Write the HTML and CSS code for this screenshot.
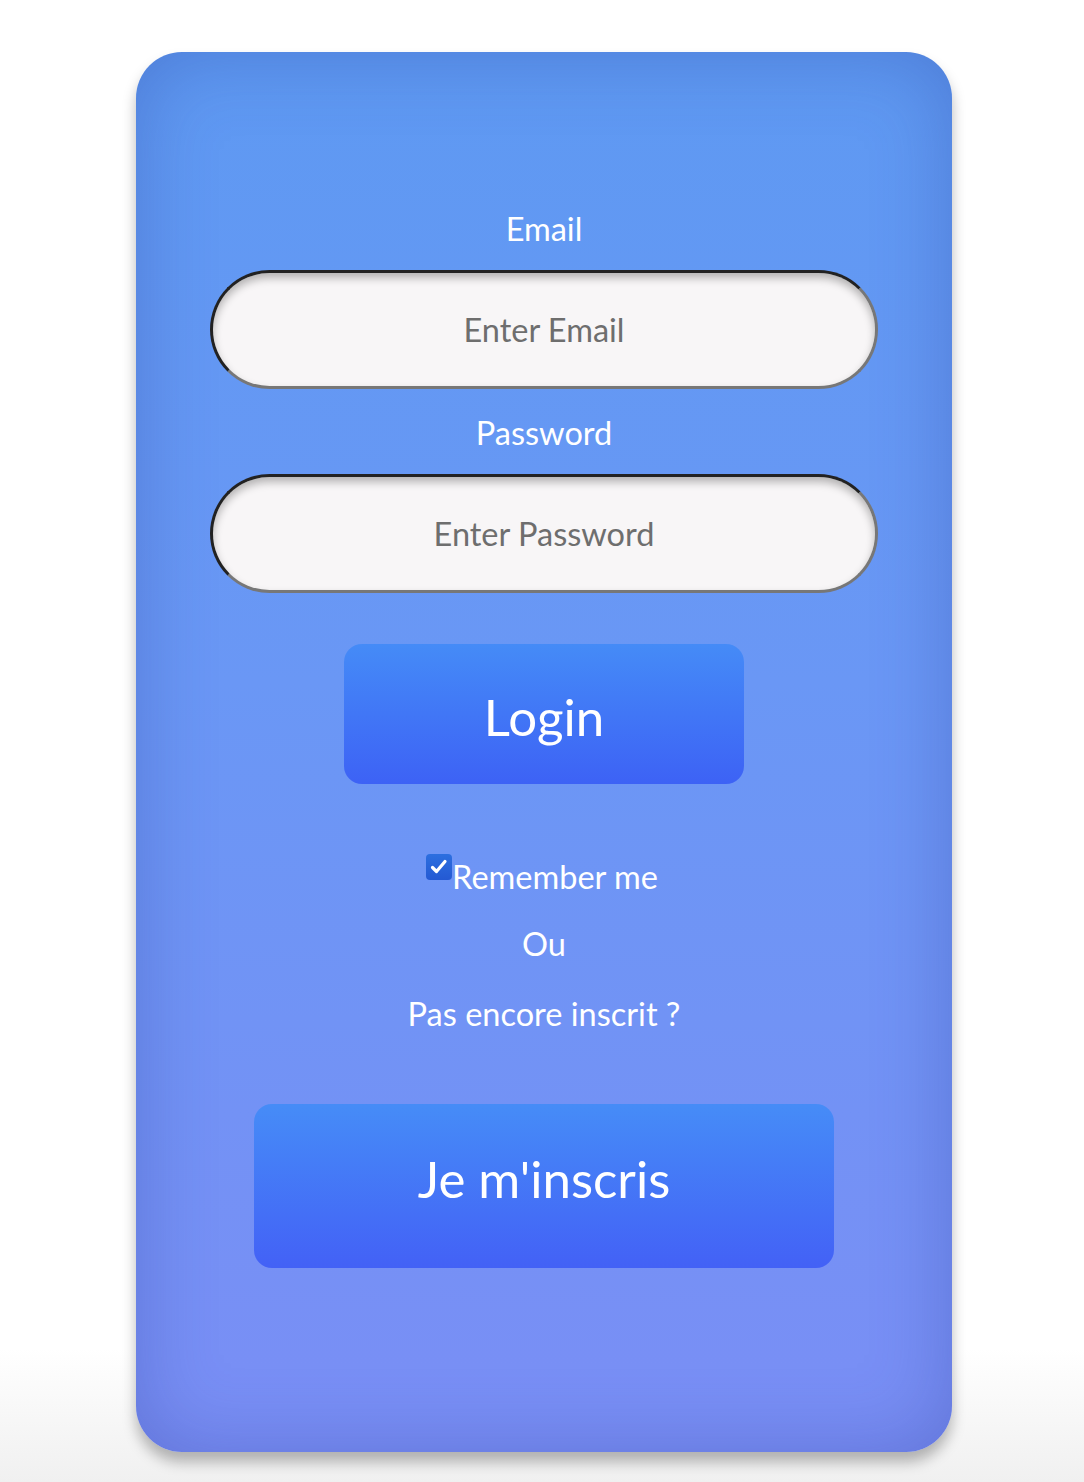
FILE: index.html
```html
<!DOCTYPE html>
<html lang="fr">
<head>
<meta charset="utf-8">
<title>Login</title>
<link rel="stylesheet" href="styles.css">
</head>
<body>
<main class="card">
  <form class="form">
    <label class="field-label" for="email">Email</label>
    <input class="field" id="email" type="email" placeholder="Enter Email">
    <label class="field-label label-password" for="password">Password</label>
    <input class="field" id="password" type="password" placeholder="Enter Password">
    <button class="btn btn-login" type="button">Login</button>
    <label class="remember">
      <span class="check"><svg width="26" height="26" viewBox="0 0 26 26"><path d="M6.5 13.5 L10.5 17.5 L19 7.5" fill="none" stroke="#fff" stroke-width="3.2" stroke-linecap="round" stroke-linejoin="round"/></svg></span>
      <span class="remember-text">Remember me</span>
    </label>
    <p class="line line-ou">Ou</p>
    <p class="line line-pas">Pas encore inscrit ?</p>
    <button class="btn btn-signup" type="button">Je m'inscris</button>
  </form>
</main>
</body>
</html>
```

FILE: styles.css
```css
html {
  min-height: 100%;
  background: linear-gradient(to bottom, #ffffff 0%, #ffffff 91%, #f0f0f0 100%);
}

body {
  margin: 0;
  padding: 52px 0 30px 4px;
  display: flex;
  justify-content: center;
  font-family: "Lato", "Open Sans", sans-serif;
  color: #fff;
}

.card {
  box-sizing: border-box;
  width: 816px;
  height: 1400px;
  flex: none;
  border-radius: 46px;
  background: linear-gradient(to bottom, #5e99f2 0%, #6a97f5 45%, #7a8ef5 100%);
  box-shadow: inset 0 0 80px rgba(40, 60, 150, 0.32), 0 10px 14px rgba(0, 0, 0, 0.28);
  padding-top: 157px;
}

.form {
  display: flex;
  flex-direction: column;
  align-items: center;
}

.field-label {
  display: block;
  height: 40px;
  line-height: 40px;
  font-size: 32.5px;
  text-align: center;
}

.label-password {
  margin-top: 24px;
}

.field {
  box-sizing: border-box;
  display: block;
  width: 668px;
  height: 119px;
  margin-top: 21px;
  border: 3px solid;
  border-color: #222 #777 #777 #222;
  border-radius: 60px;
  background: #f8f6f7;
  box-shadow: inset 0 5px 9px rgba(0, 0, 0, 0.28);
  font-family: inherit;
  font-size: 32.5px;
  color: #333;
  text-align: center;
  outline: none;
}

.field::placeholder {
  color: #6e6e6e;
  opacity: 1;
}

.btn {
  box-sizing: border-box;
  border: none;
  border-radius: 18px;
  color: #fff;
  font-family: inherit;
  font-size: 51px;
  cursor: pointer;
}

.btn-login {
  width: 400px;
  height: 140px;
  margin-top: 51px;
  padding-top: 6px;
  background: linear-gradient(to bottom, #458bf7, #3d62f5);
}

.remember {
  display: flex;
  align-items: flex-start;
  margin-top: 70px;
  height: 40px;
}

.check {
  display: block;
  width: 26px;
  height: 26px;
  margin-left: -4px;
  border-radius: 4px;
  background: linear-gradient(to bottom, #2c6fe0, #2459d3);
}

.check svg {
  display: block;
}

.remember-text {
  font-size: 32.5px;
  line-height: 40px;
  margin-top: 3px;
}

.line {
  margin: 30px 0 0;
  height: 40px;
  line-height: 40px;
  font-size: 32.5px;
}

.btn-signup {
  width: 580px;
  height: 164px;
  margin-top: 70px;
  padding-bottom: 16px;
  background: linear-gradient(to bottom, #468cf7, #4361f6);
}
```
